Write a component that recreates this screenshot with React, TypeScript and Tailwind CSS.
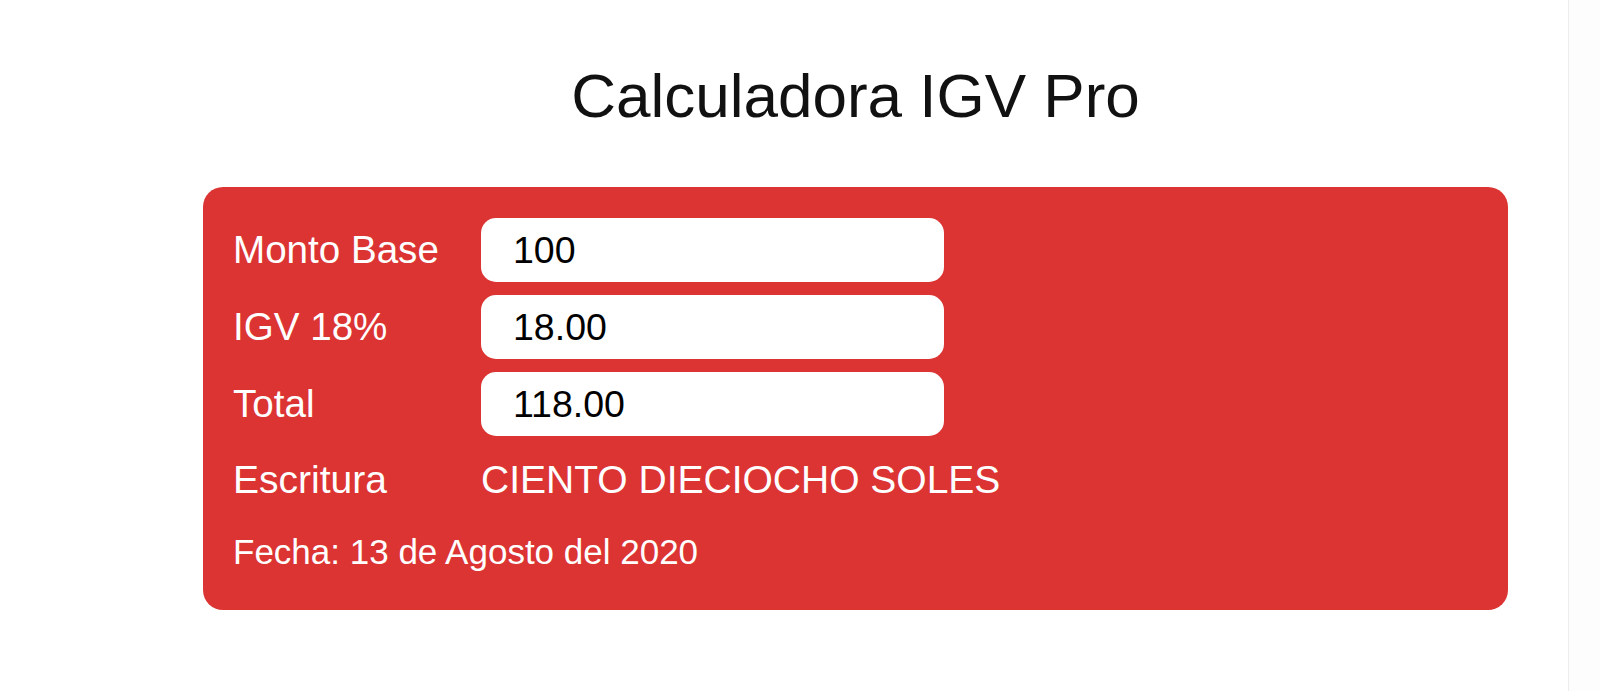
import React from 'react';

const rows = [
  { label: 'Monto Base', value: '100' },
  { label: 'IGV 18%', value: '18.00' },
  { label: 'Total', value: '118.00' },
];

const Field: React.FC<{ label: string; value: string }> = ({ label, value }) => (
  <div className="flex items-center h-[64px]">
    <label className="w-[248px] shrink-0 text-[38.6px] leading-none text-white">{label}</label>
    <input
      readOnly
      value={value}
      className="w-[463px] h-[64px] rounded-[15px] bg-white pl-[32px] text-[37.5px] leading-none text-black outline-none"
      style={{ fontFamily: '"Liberation Sans", Arial, sans-serif' }}
    />
  </div>
);

export default function App() {
  return (
    <div
      className="flex min-h-[691px] w-full bg-white"
      style={{ fontFamily: '"Liberation Sans", Arial, sans-serif' }}
    >
      <main className="flex-1 pl-[203px]">
        <div className="w-[1305px]">
          <h1 className="mt-[65px] text-center text-[62px] leading-none text-[#111]">Calculadora IGV Pro</h1>

          <div className="mt-[60px] rounded-[20px] bg-[#dc3333] pl-[30px] pt-[31px] pb-[41px]">
            <div className="flex flex-col gap-[13px]">
              {rows.map((r) => (
                <Field key={r.label} label={r.label} value={r.value} />
              ))}
            </div>

            <div className="mt-[24px] flex text-[39px] leading-none text-white">
              <span className="w-[248px] shrink-0">Escritura</span>
              <span>CIENTO DIECIOCHO SOLES</span>
            </div>

            <p className="mt-[35px] text-[35px] leading-none text-white">Fecha: 13 de Agosto del 2020</p>
          </div>
        </div>
      </main>

      {/* scrollbar gutter */}
      <aside className="w-[32px] shrink-0 border-l border-[#ececec] bg-[#fdfdfd]" />
    </div>
  );
}
